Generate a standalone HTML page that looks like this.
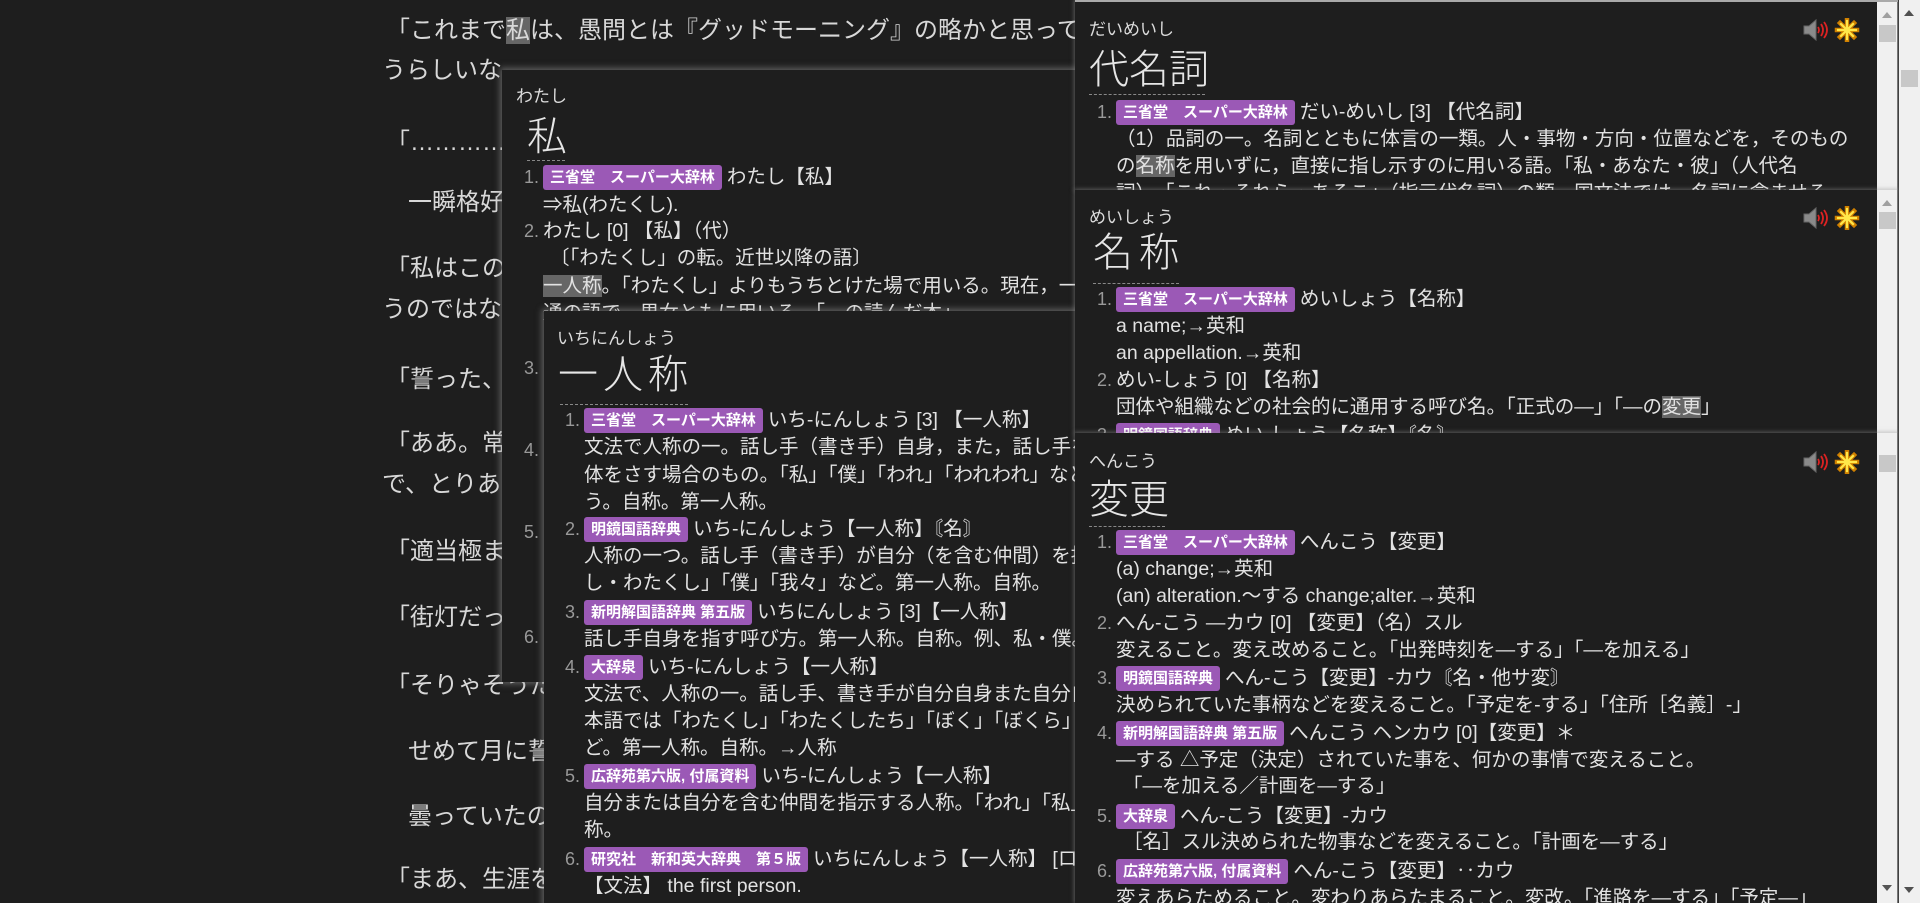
<!DOCTYPE html>
<html><head><meta charset="utf-8">
<style>
*{margin:0;padding:0;box-sizing:border-box}
html,body{width:1920px;height:903px;overflow:hidden;background:#1e1e1e}
body{position:relative;font-family:"Liberation Sans","Noto Sans CJK JP",sans-serif;color:#dcdcdc}
.pg{position:absolute;left:386px;font-size:24px;line-height:34px;white-space:nowrap;color:#d8d8d8}
.hl{background:#666}
.pop{position:absolute;background:#1e1e1e;overflow:hidden;box-shadow:0 0 6px 2px rgba(150,150,150,.55)}
.l{position:absolute;white-space:nowrap;font-size:19.5px;line-height:27px;color:#e2e2e2}
.n{position:absolute;font-size:18px;line-height:27px;color:#999}
.rd{position:absolute;font-size:17px;line-height:24px;color:#dcdcdc}
.hw{position:absolute;font-size:40px;line-height:48px;color:#e6e6e6;font-weight:300}
.dt{position:absolute;height:0;border-top:1px dashed #888}
.b{display:inline-block;background:#9b59b6;color:#fff;font-weight:bold;font-size:15px;line-height:25px;height:25px;padding:0 7px;border-radius:3px;margin-right:5px;vertical-align:1px}
.sb{position:absolute;right:0;top:0;bottom:0;width:21px;background:#f0f0f0;border-right:1px solid #777}
.up{position:absolute;left:5px;width:0;height:0;border-left:5px solid transparent;border-right:5px solid transparent;border-bottom:6px solid #a0a0a0}
.th{position:absolute;left:2px;width:17px;height:17px;background:#c8c8c8}
.ic{position:absolute;right:36px;top:17px}
</style></head><body>

<div class="pg" style="top:14px">「これまで<span class="hl">私</span>は、愚問とは『グッドモーニング』の略かと思っていたけど</div>
<div class="pg" style="top:54px;left:382px">うらしいな</div>
<div class="pg" style="top:126px">「…………</div>
<div class="pg" style="top:186px;left:408px">一瞬格好</div>
<div class="pg" style="top:252px">「私はこの</div>
<div class="pg" style="top:293px;left:382px">うのではな</div>
<div class="pg" style="top:363px">「誓った、</div>
<div class="pg" style="top:427px">「ああ。常</div>
<div class="pg" style="top:468px;left:382px">で、とりあ</div>
<div class="pg" style="top:535px">「適当極ま</div>
<div class="pg" style="top:601px">「街灯だっ</div>
<div class="pg" style="top:669px">「そりゃそうだ</div>
<div class="pg" style="top:735px;left:408px">せめて月に誓</div>
<div class="pg" style="top:800px;left:408px">曇っていたの</div>
<div class="pg" style="top:863px">「まあ、生涯を</div>

<!-- popup 私 -->
<div class="pop" style="left:502px;top:70px;width:600px;height:612px">
<div class="rd" style="left:14px;top:15px">わたし</div>
<div class="hw" style="left:25px;top:43px">私</div>
<div class="dt" style="left:25px;top:90px;width:38px"></div>
<div class="n" style="left:22px;top:94px">1.</div><div class="l" style="left:41px;top:94px"><span class="b">三省堂　スーパー大辞林</span>わたし【私】</div>
<div class="l" style="left:41px;top:122px">⇒私(わたくし).</div>
<div class="n" style="left:22px;top:148px">2.</div><div class="l" style="left:41px;top:148px">わたし [0] 【私】（代）</div>
<div class="l" style="left:48px;top:175px">〔「わたくし」の転。近世以降の語〕</div>
<div class="l" style="left:41px;top:203px"><span class="hl">一人称</span>。「わたくし」よりもうちとけた場で用いる。現在，一般に</div>
<div class="l" style="left:41px;top:230px">通の語で，男女ともに用いる。「―の読んだ本」</div>
<div class="n" style="left:22px;top:285px">3.</div>
<div class="n" style="left:22px;top:367px">4.</div>
<div class="n" style="left:22px;top:449px">5.</div>
<div class="n" style="left:22px;top:554px">6.</div>
</div>

<!-- popup 一人称 -->
<div class="pop" style="left:544px;top:311px;width:560px;height:620px">
<div class="rd" style="left:13px;top:16px">いちにんしょう</div>
<div class="hw" style="left:14px;top:40px;letter-spacing:5px">一人称</div>
<div class="dt" style="left:16px;top:93px;width:128px"></div>
<div class="n" style="left:21px;top:96px">1.</div><div class="l" style="left:40px;top:96px"><span class="b">三省堂　スーパー大辞林</span>いち-にんしょう [3] 【一人称】</div>
<div class="l" style="left:40px;top:123px">文法で人称の一。話し手（書き手）自身，また，話し手を含む</div>
<div class="l" style="left:40px;top:151px">体をさす場合のもの。「私」「僕」「われ」「われわれ」などを</div>
<div class="l" style="left:40px;top:178px">う。自称。第一人称。</div>
<div class="n" style="left:21px;top:205px">2.</div><div class="l" style="left:40px;top:205px"><span class="b">明鏡国語辞典</span>いち-にんしょう【一人称】〘名〙</div>
<div class="l" style="left:40px;top:232px">人称の一つ。話し手（書き手）が自分（を含む仲間）を指す</div>
<div class="l" style="left:40px;top:259px">し・わたくし」「僕」「我々」など。第一人称。自称。</div>
<div class="n" style="left:21px;top:288px">3.</div><div class="l" style="left:40px;top:288px"><span class="b">新明解国語辞典 第五版</span>いちにんしょう [3]【一人称】</div>
<div class="l" style="left:40px;top:315px">話し手自身を指す呼び方。第一人称。自称。例、私・僕。</div>
<div class="n" style="left:21px;top:343px">4.</div><div class="l" style="left:40px;top:343px"><span class="b">大辞泉</span>いち-にんしょう【一人称】</div>
<div class="l" style="left:40px;top:370px">文法で、人称の一。話し手、書き手が自分自身また自分自身を</div>
<div class="l" style="left:40px;top:397px">本語では「わたくし」「わたくしたち」「ぼく」「ぼくら」な</div>
<div class="l" style="left:40px;top:424px">ど。第一人称。自称。→人称</div>
<div class="n" style="left:21px;top:452px">5.</div><div class="l" style="left:40px;top:452px"><span class="b">広辞苑第六版, 付属資料</span>いち-にんしょう【一人称】</div>
<div class="l" style="left:40px;top:479px">自分または自分を含む仲間を指示する人称。「われ」「私」</div>
<div class="l" style="left:40px;top:506px">称。</div>
<div class="n" style="left:21px;top:535px">6.</div><div class="l" style="left:40px;top:535px"><span class="b">研究社　新和英大辞典　第５版</span>いちにんしょう【一人称】 [ロ</div>
<div class="l" style="left:40px;top:562px">【文法】 the first person.</div>
</div>

<!-- right popup A -->
<div class="pop" style="left:1075px;top:0;width:823px;height:190px;box-shadow:0 0 4px 1px rgba(150,150,150,.5);border-top:2px solid #aaa">
<div class="rd" style="left:14px;top:16px">だいめいし</div>
<div class="hw" style="left:14px;top:44px">代名詞</div>
<div class="dt" style="left:14px;top:92px;width:116px"></div>
<div class="n" style="left:22px;top:97px">1.</div><div class="l" style="left:41px;top:97px"><span class="b">三省堂　スーパー大辞林</span>だい-めいし [3] 【代名詞】</div>
<div class="l" style="left:41px;top:124px">（1）品詞の一。名詞とともに体言の一類。人・事物・方向・位置などを，そのもの</div>
<div class="l" style="left:41px;top:151px">の<span class="hl">名称</span>を用いずに，直接に指し示すのに用いる語。「私・あなた・彼」（人代名</div>
<div class="l" style="left:41px;top:178px">詞），「これ・それら・あそこ」（指示代名詞）の類。国文法では，名詞に含ませる</div>
<svg class="ic" width="60" height="24" viewBox="0 0 60 24" style="top:16px">
<path d="M2 8h5l7-6v20l-7-6H2z" fill="#8a8a8a" stroke="#666"/>
<path d="M16 9q2 3 0 6M19 6q4 6 0 12M22 4q6 8 0 16" stroke="#d22" stroke-width="1.8" fill="none"/>
<g stroke="#d08000" stroke-width="4.5" stroke-linecap="square"><path d="M45 2v20M35 12h20M38 5l14 14M52 5l-14 14"/></g>
<g stroke="#ffe84a" stroke-width="2.2" stroke-linecap="square"><path d="M45 3v18M36 12h18M39 6l12 12M51 6l-12 12"/></g>
</svg>
<div class="sb"><div class="up" style="top:10px"></div><div class="th" style="top:23px"></div></div>
</div>

<!-- right popup B -->
<div class="pop" style="left:1075px;top:190px;width:823px;height:243px;box-shadow:0 0 4px 1px rgba(150,150,150,.5)">
<div class="rd" style="left:14px;top:16px">めいしょう</div>
<div class="hw" style="left:18px;top:39px;letter-spacing:6px">名称</div>
<div class="dt" style="left:18px;top:93px;width:86px"></div>
<div class="n" style="left:22px;top:96px">1.</div><div class="l" style="left:41px;top:96px"><span class="b">三省堂　スーパー大辞林</span>めいしょう【名称】</div>
<div class="l" style="left:41px;top:123px">a name;→英和</div>
<div class="l" style="left:41px;top:150px">an appellation.→英和</div>
<div class="n" style="left:22px;top:177px">2.</div><div class="l" style="left:41px;top:177px">めい-しょう [0] 【名称】</div>
<div class="l" style="left:41px;top:204px">団体や組織などの社会的に通用する呼び名。「正式の―」「―の<span class="hl">変更</span>」</div>
<div class="n" style="left:22px;top:232px">3.</div><div class="l" style="left:41px;top:232px"><span class="b">明鏡国語辞典</span>めい-しょう【名称】〘名〙</div>
<svg class="ic" width="60" height="24" viewBox="0 0 60 24" style="top:16px">
<path d="M2 8h5l7-6v20l-7-6H2z" fill="#8a8a8a" stroke="#666"/>
<path d="M16 9q2 3 0 6M19 6q4 6 0 12M22 4q6 8 0 16" stroke="#d22" stroke-width="1.8" fill="none"/>
<g stroke="#d08000" stroke-width="4.5" stroke-linecap="square"><path d="M45 2v20M35 12h20M38 5l14 14M52 5l-14 14"/></g>
<g stroke="#ffe84a" stroke-width="2.2" stroke-linecap="square"><path d="M45 3v18M36 12h18M39 6l12 12M51 6l-12 12"/></g>
</svg>
<div class="sb"><div class="up" style="top:10px"></div><div class="th" style="top:22px"></div></div>
</div>

<!-- right popup C -->
<div class="pop" style="left:1075px;top:433px;width:823px;height:470px;box-shadow:0 0 4px 1px rgba(150,150,150,.5)">
<div class="rd" style="left:14px;top:17px">へんこう</div>
<div class="hw" style="left:14px;top:43px">変更</div>
<div class="dt" style="left:14px;top:93px;width:76px"></div>
<div class="n" style="left:22px;top:96px">1.</div><div class="l" style="left:41px;top:96px"><span class="b">三省堂　スーパー大辞林</span>へんこう【変更】</div>
<div class="l" style="left:41px;top:123px">(a) change;→英和</div>
<div class="l" style="left:41px;top:150px">(an) alteration.～する change;alter.→英和</div>
<div class="n" style="left:22px;top:177px">2.</div><div class="l" style="left:41px;top:177px">へん-こう ―カウ [0] 【変更】（名）スル</div>
<div class="l" style="left:41px;top:204px">変えること。変え改めること。「出発時刻を―する」「―を加える」</div>
<div class="n" style="left:22px;top:232px">3.</div><div class="l" style="left:41px;top:232px"><span class="b">明鏡国語辞典</span>へん-こう【変更】‐カウ〘名・他サ変〙</div>
<div class="l" style="left:41px;top:259px">決められていた事柄などを変えること。「予定を‐する」「住所［名義］‐」</div>
<div class="n" style="left:22px;top:287px">4.</div><div class="l" style="left:41px;top:287px"><span class="b">新明解国語辞典 第五版</span>へんこう ヘンカウ [0]【変更】＊</div>
<div class="l" style="left:41px;top:314px">―する △予定（決定）されていた事を、何かの事情で変えること。</div>
<div class="l" style="left:48px;top:340px">「―を加える／計画を―する」</div>
<div class="n" style="left:22px;top:370px">5.</div><div class="l" style="left:41px;top:370px"><span class="b">大辞泉</span>へん-こう【変更】‐カウ</div>
<div class="l" style="left:48px;top:396px">［名］スル決められた物事などを変えること。「計画を―する」</div>
<div class="n" style="left:22px;top:425px">6.</div><div class="l" style="left:41px;top:425px"><span class="b">広辞苑第六版, 付属資料</span>へん-こう【変更】‥カウ</div>
<div class="l" style="left:41px;top:452px">変えあらためること。変わりあらたまること。変改。「進路を―する」「予定―」</div>
<svg class="ic" width="60" height="24" viewBox="0 0 60 24" style="top:17px">
<path d="M2 8h5l7-6v20l-7-6H2z" fill="#8a8a8a" stroke="#666"/>
<path d="M16 9q2 3 0 6M19 6q4 6 0 12M22 4q6 8 0 16" stroke="#d22" stroke-width="1.8" fill="none"/>
<g stroke="#d08000" stroke-width="4.5" stroke-linecap="square"><path d="M45 2v20M35 12h20M38 5l14 14M52 5l-14 14"/></g>
<g stroke="#ffe84a" stroke-width="2.2" stroke-linecap="square"><path d="M45 3v18M36 12h18M39 6l12 12M51 6l-12 12"/></g>
</svg>
<div class="sb"><div class="th" style="top:22px"></div>
<div style="position:absolute;left:5px;bottom:12px;border-left:5px solid transparent;border-right:5px solid transparent;border-top:6px solid #555"></div></div>
</div>

<!-- page scrollbar -->
<div style="position:absolute;left:1899px;top:0;width:21px;height:903px;background:#f0f0f0">
<div style="position:absolute;left:5px;top:10px;border-left:5px solid transparent;border-right:5px solid transparent;border-bottom:6px solid #505050"></div>
<div style="position:absolute;left:2px;top:70px;width:17px;height:17px;background:#c8c8c8"></div>
<div style="position:absolute;left:5px;bottom:10px;border-left:5px solid transparent;border-right:5px solid transparent;border-top:6px solid #505050"></div>
</div>
</body></html>
